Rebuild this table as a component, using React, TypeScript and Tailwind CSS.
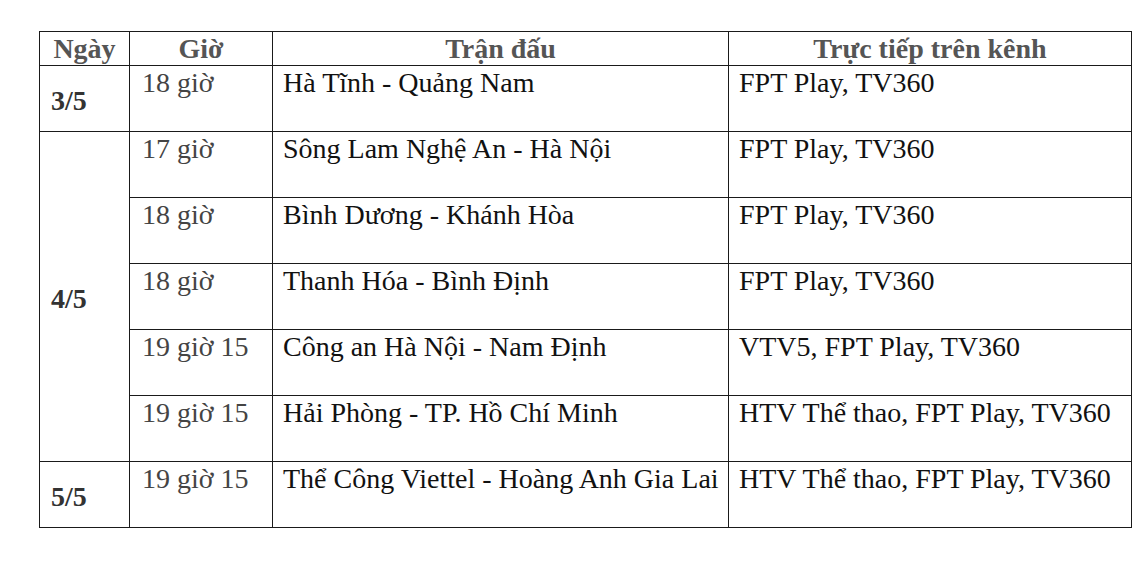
import React from "react";

const rows = [
  { time: "17 giờ", match: "Sông Lam Nghệ An - Hà Nội", ch: "FPT Play, TV360" },
  { time: "18 giờ", match: "Bình Dương - Khánh Hòa", ch: "FPT Play, TV360" },
  { time: "18 giờ", match: "Thanh Hóa - Bình Định", ch: "FPT Play, TV360" },
  { time: "19 giờ 15", match: "Công an Hà Nội - Nam Định", ch: "VTV5, FPT Play, TV360" },
  { time: "19 giờ 15", match: "Hải Phòng - TP. Hồ Chí Minh", ch: "HTV Thể thao, FPT Play, TV360" },
];

const td = "border border-[#1a1a1a] align-top pl-[10px] pt-[1px] h-[66px] leading-[1.15]";

export default function App() {
  return (
    <div className="w-[1144px] h-[584px] bg-white pt-[31px] pl-[39px]" style={{ fontFamily: '"Liberation Serif", "Times New Roman", serif' }}>
      <table className="border-collapse text-[28px] table-fixed w-[1092px]">
        <colgroup>
          <col className="w-[90px]" />
          <col className="w-[143px]" />
          <col className="w-[456px]" />
          <col className="w-[403px]" />
        </colgroup>
        <thead>
          <tr className="h-[34px]">
            {["Ngày", "Giờ", "Trận đấu", "Trực tiếp trên kênh"].map((h) => (
              <th key={h} className="border border-[#1a1a1a] font-bold text-[#555] text-center align-middle leading-[1] p-0">
                {h}
              </th>
            ))}
          </tr>
        </thead>
        <tbody>
          <tr>
            <td className="border border-[#1a1a1a] align-middle pl-[11px] font-bold text-[#333] pt-[4px]">3/5</td>
            <td className={`${td} pl-[12px] text-[#444]`}>18 giờ</td>
            <td className={`${td} text-[#111]`}>Hà Tĩnh - Quảng Nam</td>
            <td className={`${td} text-[#111]`}>FPT Play, TV360</td>
          </tr>
          {rows.map((r, i) => (
            <tr key={i}>
              {i === 0 && (
                <td rowSpan={5} className="border border-[#1a1a1a] align-middle pl-[11px] font-bold text-[#333] pt-[4px]">
                  4/5
                </td>
              )}
              <td className={`${td} pl-[12px] text-[#444]`}>{r.time}</td>
              <td className={`${td} text-[#111]`}>{r.match}</td>
              <td className={`${td} text-[#111]`}>{r.ch}</td>
            </tr>
          ))}
          <tr>
            <td className="border border-[#1a1a1a] align-middle pl-[11px] font-bold text-[#333] pt-[4px]">5/5</td>
            <td className={`${td} pl-[12px] text-[#444]`}>19 giờ 15</td>
            <td className={`${td} text-[#111]`}>Thể Công Viettel - Hoàng Anh Gia Lai</td>
            <td className={`${td} text-[#111]`}>HTV Thể thao, FPT Play, TV360</td>
          </tr>
        </tbody>
      </table>
    </div>
  );
}
